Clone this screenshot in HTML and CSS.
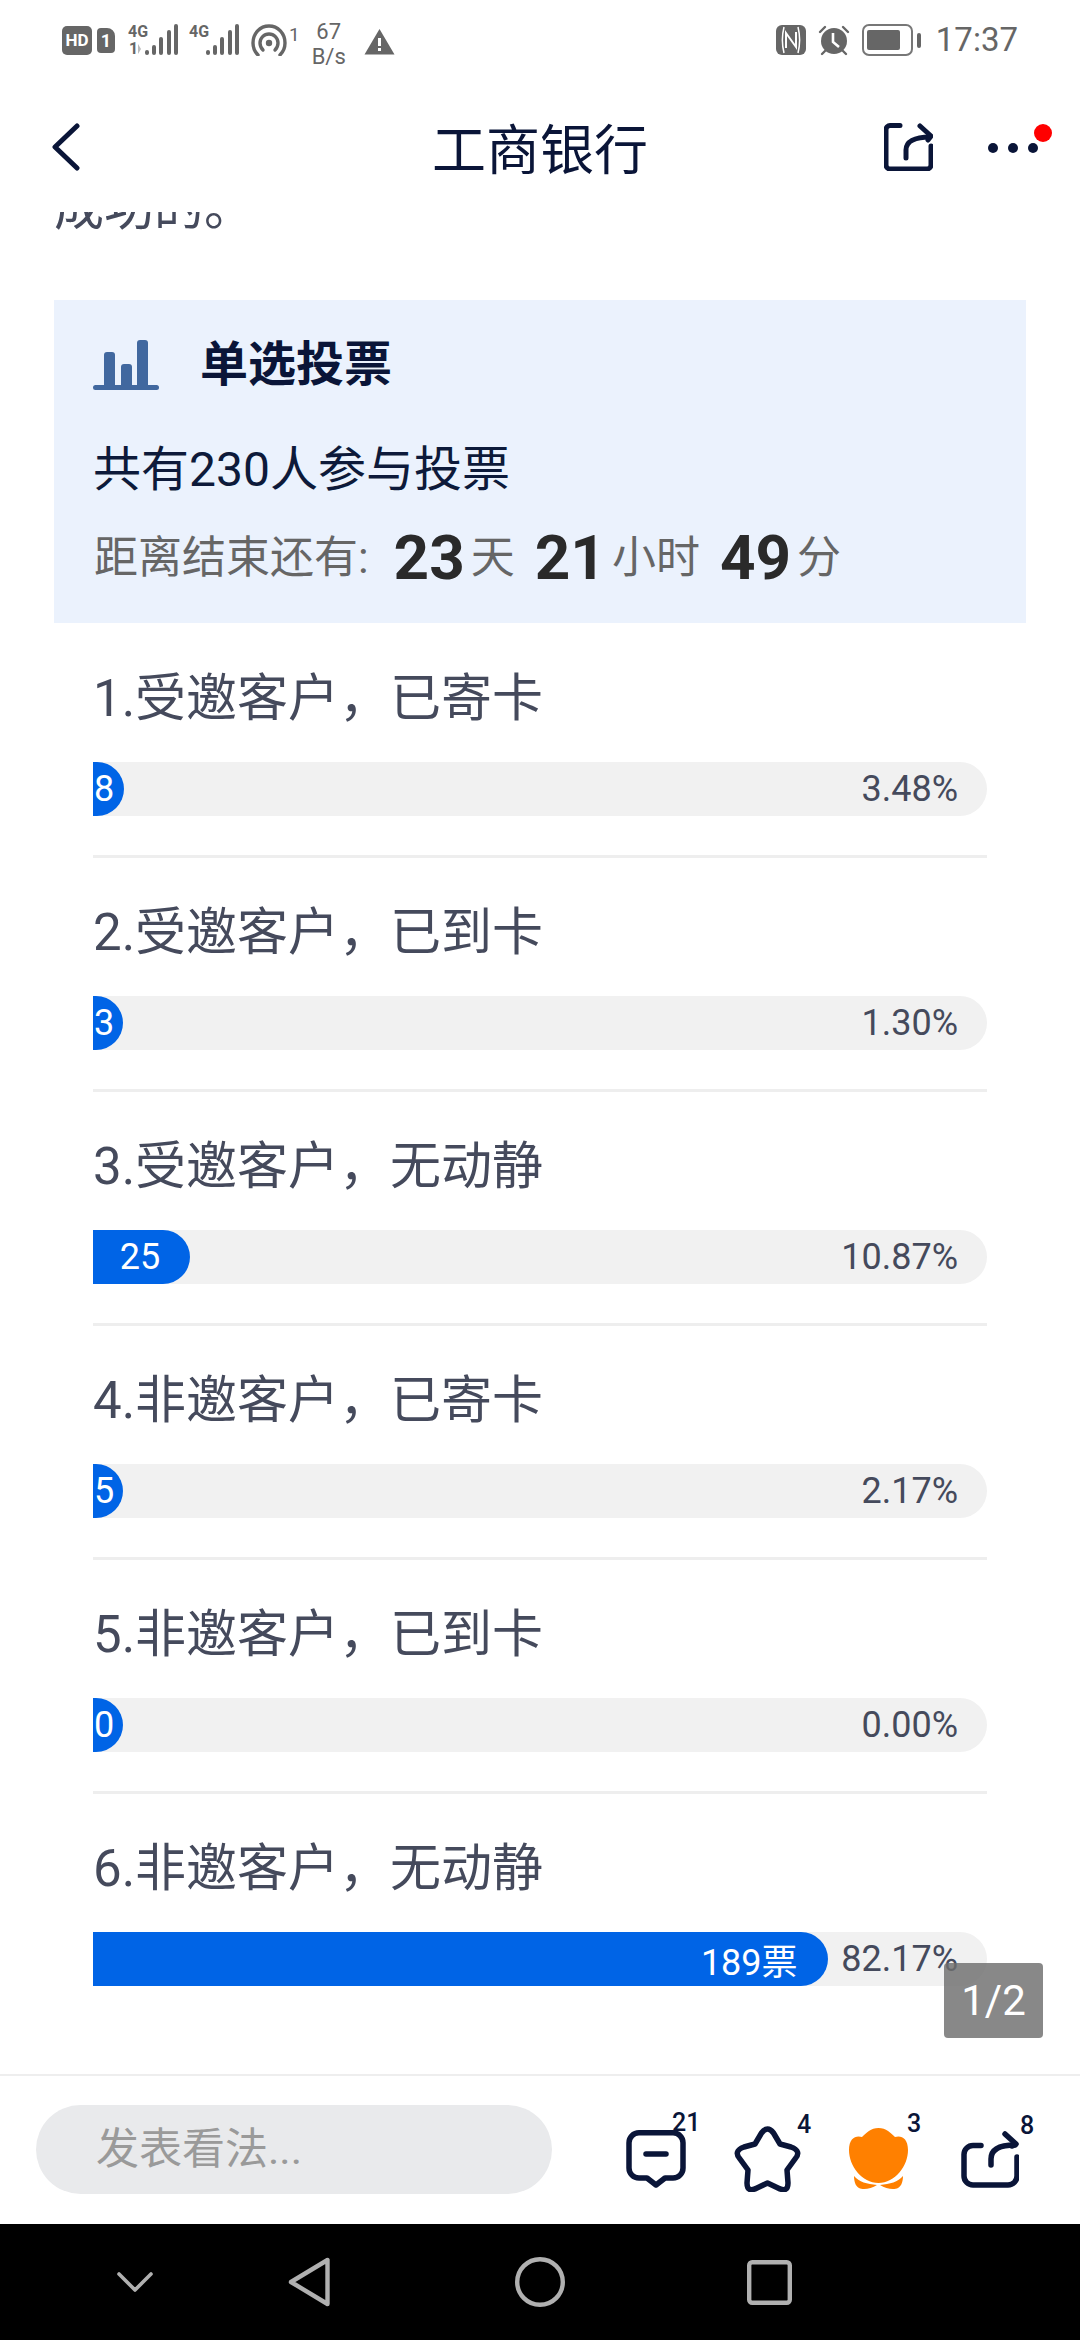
FILE: index.html
```html
<!DOCTYPE html>
<html lang="zh-CN">
<head>
    <meta charset="UTF-8">
    <meta name="viewport" content="width=device-width, initial-scale=1.0">
    <title>工商银行</title>
    <link rel="stylesheet" href="styles.css">
</head>
<body>
<div class="page">
    <div class="status-bar">
        <div class="status-left">
            <span class="hd">HD</span>
            <span class="sim">1</span>
            <svg class="signal" width="50" height="32" viewBox="0 0 50 32">
                <text x="0" y="13" class="net">4G</text>
                <text x="1" y="30" class="net">1</text>
                <path d="M10 20l3 5-3 5z" fill="#bbb"/>
                <rect x="17" y="26" width="4" height="5" rx="2" fill="#666"/>
                <rect x="24" y="21" width="4" height="10" rx="2" fill="#666"/>
                <rect x="31" y="13" width="4" height="18" rx="2" fill="#666"/>
                <rect x="39" y="6" width="4" height="25" rx="2" fill="#666"/>
                <rect x="46" y="0" width="4" height="31" rx="2" fill="#666"/>
            </svg>
            <svg class="signal signal-two" width="50" height="32" viewBox="0 0 50 32">
                <text x="0" y="13" class="net">4G</text>
                <rect x="17" y="26" width="4" height="5" rx="2" fill="#666"/>
                <rect x="24" y="21" width="4" height="10" rx="2" fill="#666"/>
                <rect x="31" y="13" width="4" height="18" rx="2" fill="#666"/>
                <rect x="39" y="6" width="4" height="25" rx="2" fill="#666"/>
                <rect x="46" y="0" width="4" height="31" rx="2" fill="#666"/>
            </svg>
            <svg class="hotspot" width="36" height="32" viewBox="0 0 36 32" fill="none" stroke="#666" stroke-width="3.4" stroke-linecap="round">
                <path d="M7 31C3.500 27.500 2 23.500 2 19 2 9.500 9 2 18 2s16 7.500 16 17c0 4.500-1.500 8.500-5 12"/>
                <path d="M12 26c-2-2-3-4.500-3-7 0-5 4-9 9-9s9 4 9 9c0 2.500-1 5-3 7"/>
                <circle cx="18" cy="19" r="3.200" fill="#666" stroke="none"/>
            </svg>
            <span class="hotspot-num">1</span>
            <span class="speed"><span>67</span><span>B/s</span></span>
            <svg class="warn" width="31" height="27" viewBox="0 0 31 27">
                <path d="M15.500 1L30.500 26.500H.5z" fill="#666"/>
                <rect x="14" y="10" width="3" height="8" fill="#fff"/>
                <rect x="14" y="20" width="3" height="3" fill="#fff"/>
            </svg>
        </div>
        <div class="status-right">
            <svg width="30" height="30" viewBox="0 0 30 30">
                <rect width="30" height="30" rx="6" fill="#666"/>
                <path d="M8 2c-2 8-2 18 0 26M22 2c2 8 2 18 0 26" stroke="#fff" stroke-width="1.500" fill="none"/>
                <path d="M10 23V8l10 14V7" stroke="#fff" stroke-width="2" fill="none"/>
            </svg>
            <svg class="alarm" width="32" height="31" viewBox="0 0 32 31">
                <circle cx="16" cy="16" r="13" fill="#666"/>
                <path d="M15 8v9l6 5" stroke="#fff" stroke-width="2.600" fill="none"/>
                <path d="M2 7l5-5M30 7l-5-5M4 29l3-3M28 29l-3-3" stroke="#666" stroke-width="2.400" stroke-linecap="round"/>
            </svg>
            <svg class="battery" width="59" height="32" viewBox="0 0 59 32">
                <rect x="1" y="1" width="49" height="30" rx="6" fill="none" stroke="#777" stroke-width="2"/>
                <rect x="5" y="6" width="33" height="20" rx="2" fill="#666"/>
                <rect x="55" y="9" width="4" height="15" rx="2" fill="#666"/>
            </svg>
            <span class="clock">17:37</span>
        </div>
    </div>

    <header class="top-bar">
        <div class="top-left">
            <svg width="28" height="48" viewBox="0 0 28 48" fill="none" stroke="#0a1538" stroke-width="5" stroke-linecap="round" stroke-linejoin="round">
                <path d="M25 3L3 24l22 21"/>
            </svg>
        </div>
        <h1 class="top-title">工商银行</h1>
        <div class="top-right">
            <svg width="49" height="48" viewBox="0 0 49 48" fill="none" stroke="#0a1538" stroke-width="5" stroke-linecap="round" stroke-linejoin="round">
                <path d="M16 2.500H6a4 4 0 0 0-4 4V42a4 4 0 0 0 4 4h37a4 4 0 0 0 4-4V23"/>
                <path d="M22 35v-8c0-8 8-13 24-13"/>
                <path d="M36 3l11 10-3 4"/>
            </svg>
            <svg class="more" width="67" height="40" viewBox="0 0 67 40">
                <circle cx="7" cy="28" r="5" fill="#0a1538"/>
                <circle cx="27" cy="28" r="5" fill="#0a1538"/>
                <circle cx="47" cy="28" r="5" fill="#0a1538"/>
                <circle cx="57" cy="13" r="9" fill="#f00"/>
            </svg>
        </div>
    </header>

    <main class="content">
        <p class="intro">成功的。</p>

        <section class="vote-card">
            <div class="vote-head">
                <svg width="66" height="50" viewBox="0 0 66 50" fill="#41689f">
                    <rect x="11" y="12" width="11" height="36" rx="3"/>
                    <rect x="28" y="24" width="11" height="24" rx="3"/>
                    <rect x="44" y="0" width="11" height="48" rx="3"/>
                    <rect x="0" y="45" width="66" height="5" rx="2.500"/>
                </svg>
                <h2>单选投票</h2>
            </div>
            <p class="vote-count">共有230人参与投票</p>
            <p class="vote-time">距离结束还有: <b class="first">23</b><span>天</span><b>21</b><span>小时</span><b>49</b><span>分</span></p>
        </section>

        <ul class="options">
            <li class="option">
                <p class="option-title">1.受邀客户，已寄卡</p>
                <div class="track"><div class="fill fill-min" style="width:3.48%">8</div><span class="percent">3.48%</span></div>
            </li>
            <li class="option">
                <p class="option-title">2.受邀客户，已到卡</p>
                <div class="track"><div class="fill fill-min" style="width:1.30%">3</div><span class="percent">1.30%</span></div>
            </li>
            <li class="option">
                <p class="option-title">3.受邀客户，无动静</p>
                <div class="track"><div class="fill" style="width:10.87%">25</div><span class="percent">10.87%</span></div>
            </li>
            <li class="option">
                <p class="option-title">4.非邀客户，已寄卡</p>
                <div class="track"><div class="fill fill-min" style="width:2.17%">5</div><span class="percent">2.17%</span></div>
            </li>
            <li class="option">
                <p class="option-title">5.非邀客户，已到卡</p>
                <div class="track"><div class="fill fill-min" style="width:0%">0</div><span class="percent">0.00%</span></div>
            </li>
            <li class="option">
                <p class="option-title">6.非邀客户，无动静</p>
                <div class="track"><div class="fill" style="width:82.17%">189票</div><span class="percent">82.17%</span></div>
            </li>
        </ul>
    </main>

    <div class="page-badge">1/2</div>

    <footer class="comment-bar">
        <div class="comment-input">发表看法...</div>
        <div class="actions">
            <div class="action action-comment">
                <svg width="60" height="58" viewBox="0 0 60 58" fill="none" stroke="#0a1538" stroke-width="5.500" stroke-linecap="round" stroke-linejoin="round">
                    <path d="M13 2.800h34a10 10 0 0 1 10 10V38a10 10 0 0 1-10 10H39l-9 7-9-7h-8A10 10 0 0 1 3 38V12.800a10 10 0 0 1 10-10z"/>
                    <path d="M20 24h20"/>
                </svg>
                <span class="count">21</span>
            </div>
            <div class="action action-star">
                <svg width="69" height="66" viewBox="0 0 69 66" fill="none" stroke="#0a1538" stroke-width="5.500" stroke-linejoin="round">
                    <path d="M28.500 7Q34.500-1 40.500 7L47 18 58 21Q69 25 62 33L54 44 55 57Q55 67 45 62L34.500 57 24 62Q14 67 14 57L15 44 7 33Q0 25 11 21L22 18Z"/>
                </svg>
                <span class="count">4</span>
            </div>
            <div class="action action-flower">
                <svg width="59" height="62" viewBox="0 0 59 62" fill="#ff8000">
                    <path d="M29.500 0C37 0 42 5 46 9 52 7 59 10 59 22 59 38 46 55 29.500 55 13 55 0 38 0 22 0 10 7 7 13 9 17 5 22 0 29.500 0Z"/>
                    <path d="M5 48C10 54 18 56 28 57 22 61 14 62 10 60 6 58 5 52 5 48Z"/>
                    <path d="M54 48C49 54 41 56 31 57 37 61 45 62 49 60 53 58 54 52 54 48Z"/>
                </svg>
                <span class="count">3</span>
            </div>
            <div class="action action-share">
                <svg width="58" height="58" viewBox="0 0 58 58" fill="none" stroke="#0a1538" stroke-width="5.500" stroke-linecap="round" stroke-linejoin="round">
                    <path d="M20 15.500H12a9 9 0 0 0-9 9V46a9 9 0 0 0 9 9h35a9 9 0 0 0 9-9V27"/>
                    <path d="M30 35v-6c0-9 8-14 24-14"/>
                    <path d="M44 4l11 10-4 2"/>
                </svg>
                <span class="count">8</span>
            </div>
        </div>
    </footer>

    <nav class="nav-bar">
        <svg class="nav-down" width="36" height="20" viewBox="0 0 36 20" fill="none" stroke="#b0b0b0" stroke-width="3.600" stroke-linecap="round" stroke-linejoin="round">
            <path d="M2 2l16 16L34 2"/>
        </svg>
        <svg class="nav-back" width="42" height="50" viewBox="0 0 42 50" fill="none" stroke="#b0b0b0" stroke-width="4.400" stroke-linejoin="round">
            <path d="M39.500 3v44L3 25z"/>
        </svg>
        <svg class="nav-home" width="50" height="50" viewBox="0 0 50 50" fill="none" stroke="#b0b0b0" stroke-width="4.400">
            <circle cx="25" cy="25" r="22.800"/>
        </svg>
        <svg class="nav-recent" width="45" height="45" viewBox="0 0 45 45" fill="none" stroke="#b0b0b0" stroke-width="4.400">
            <rect x="2.200" y="2.200" width="40.600" height="40.600" rx="3"/>
        </svg>
    </nav>
</div>
</body>
</html>
```

FILE: styles.css
```css
*{
    margin: 0;
    padding: 0;
    box-sizing: border-box;
}

body{
    background-color: #fff;
    font-family: Roboto, "Noto Sans CJK SC", sans-serif;
    overflow: hidden;
}

.page{
    position: relative;
    width: 1080px;
    height: 2340px;
    display: flex;
    flex-direction: column;
    overflow: hidden;
}

/* status bar */
.status-bar{
    height: 75px;
    flex-shrink: 0;
    padding: 24px 62px 0;
    display: flex;
    justify-content: space-between;
    align-items: flex-start;
    color: #666;
}

.status-left, .status-right{
    display: flex;
    align-items: flex-start;
}

.hd{
    width: 30px;
    height: 29px;
    margin-top: 2px;
    border-radius: 5px;
    background-color: #666;
    color: #fff;
    font-size: 17px;
    font-weight: 700;
    line-height: 29px;
    text-align: center;
}

.sim{
    width: 18px;
    height: 25px;
    margin: 4px 0 0 5px;
    border-radius: 4px 8px 4px 4px;
    background-color: #666;
    color: #fff;
    font-size: 18px;
    font-weight: 700;
    line-height: 25px;
    text-align: center;
}

.signal{
    margin-left: 13px;
    overflow: visible;
}

.signal-two{
    margin-left: 11px;
}

.net{
    font-family: Roboto, sans-serif;
    font-size: 16px;
    font-weight: 700;
    fill: #666;
}

.hotspot{
    margin-left: 12px;
}

.hotspot-num{
    margin-left: 2px;
    font-size: 19px;
    line-height: 22px;
}

.speed{
    width: 34px;
    margin: -5px 0 0 12px;
    display: flex;
    flex-direction: column;
    align-items: center;
    font-size: 22px;
    line-height: 25px;
    white-space: nowrap;
}

.warn{
    margin: 4px 0 0 18px;
}

.status-right{
    align-items: center;
}

.alarm{
    margin-left: 12px;
}

.battery{
    margin-left: 12px;
}

.clock{
    margin-left: 15px;
    font-size: 33px;
    line-height: 32px;
}

/* top bar */
.top-bar{
    height: 137px;
    flex-shrink: 0;
    padding-top: 6px;
    display: grid;
    grid-template-columns: 1fr auto 1fr;
    align-items: center;
}

.top-left{
    padding-left: 52px;
    display: flex;
}

.top-title{
    font-size: 54px;
    font-weight: 400;
    color: #0a1538;
}

.top-right{
    padding-right: 27px;
    display: flex;
    justify-content: flex-end;
    align-items: center;
}

.more{
    margin: -14px 0 0 53px;
}

/* scrolling content */
.content{
    flex: 1;
    min-height: 0;
    overflow: hidden;
    padding: 0 54px;
}

.intro{
    margin: -34px 0 62px;
    font-size: 50px;
    line-height: 60px;
    color: #454a5c;
}

.vote-card{
    height: 323px;
    padding: 40px 0 0 39px;
    background-color: #ebf2fd;
}

.vote-head{
    display: flex;
    align-items: center;
    gap: 41px;
}

.vote-head h2{
    font-size: 48px;
    line-height: 50px;
    font-weight: 700;
    color: #0a1538;
}

.vote-count{
    margin-top: 50px;
    font-size: 48px;
    line-height: 60px;
    color: #0d1a3a;
}

.vote-time{
    margin-top: 28px;
    padding-left: 1px;
    display: flex;
    align-items: center;
    font-size: 44px;
    line-height: 60px;
    color: #666;
    white-space: pre;
}

.vote-time b{
    margin: 0 6px 0 20px;
    font-size: 62px;
    color: #2a2a2a;
}

.vote-time b.first{
    margin-left: 14px;
}

.options{
    list-style: none;
    margin-top: 1px;
    padding: 0 39px;
}

.option{
    padding: 45px 0 39px;
    border-bottom: 3px solid #eee;
}

.option:last-child{
    border-bottom: none;
}

.option-title{
    margin-bottom: 33px;
    font-size: 51px;
    line-height: 60px;
    color: #454a5c;
}

.track{
    height: 54px;
    display: flex;
    align-items: center;
    border-radius: 0 27px 27px 0;
    background-color: #f1f1f1;
    font-size: 36px;
}

.fill{
    height: 54px;
    min-width: 30px;
    padding-right: 30px;
    display: flex;
    align-items: center;
    justify-content: flex-end;
    flex-shrink: 0;
    border-radius: 0 27px 27px 0;
    background-color: #0064e6;
    color: #fff;
}

.fill-min{
    padding: 0 0 0 1px;
    justify-content: flex-start;
}

.percent{
    margin-left: auto;
    padding-right: 29px;
    color: #454a5c;
}

.page-badge{
    position: absolute;
    left: 944px;
    top: 1963px;
    width: 99px;
    height: 75px;
    border-radius: 4px;
    background-color: rgba(110, 110, 110, 0.82);
    color: #fff;
    font-size: 42px;
    line-height: 75px;
    text-align: center;
}

/* bottom comment bar */
.comment-bar{
    height: 150px;
    flex-shrink: 0;
    border-top: 2px solid #eee;
    padding-left: 36px;
    display: flex;
    align-items: center;
}

.comment-input{
    width: 516px;
    height: 89px;
    margin-top: -2px;
    padding-left: 60px;
    border-radius: 45px;
    background-color: #e9eaec;
    color: #9a9a9a;
    font-size: 43px;
    line-height: 89px;
}

.actions{
    margin: 18px 0 0 74px;
    display: flex;
    align-items: center;
}

.action{
    position: relative;
    display: flex;
}

.action-star, .action-flower{
    margin-left: 47px;
}

.action-share{
    margin-left: 53px;
}

.count{
    position: absolute;
    top: -19px;
    left: 100%;
    margin-left: -1px;
    font-size: 25px;
    font-weight: 500;
    line-height: 24px;
    color: #0a1538;
}

.action-comment .count{
    left: 46px;
    margin-left: 0;
}

.action-star .count{
    left: 64px;
    top: -13px;
    margin-left: 0;
}

.action-flower .count{
    top: -16px;
}

.action-share .count{
    top: -16px;
    margin-left: 1px;
}

/* android nav bar */
.nav-bar{
    height: 116px;
    flex-shrink: 0;
    background-color: #000;
    display: flex;
    align-items: center;
    padding: 0 0 0 117px;
}

.nav-back{
    margin-left: 135px;
}

.nav-home{
    margin-left: 185px;
}

.nav-recent{
    margin-left: 182px;
}
```
